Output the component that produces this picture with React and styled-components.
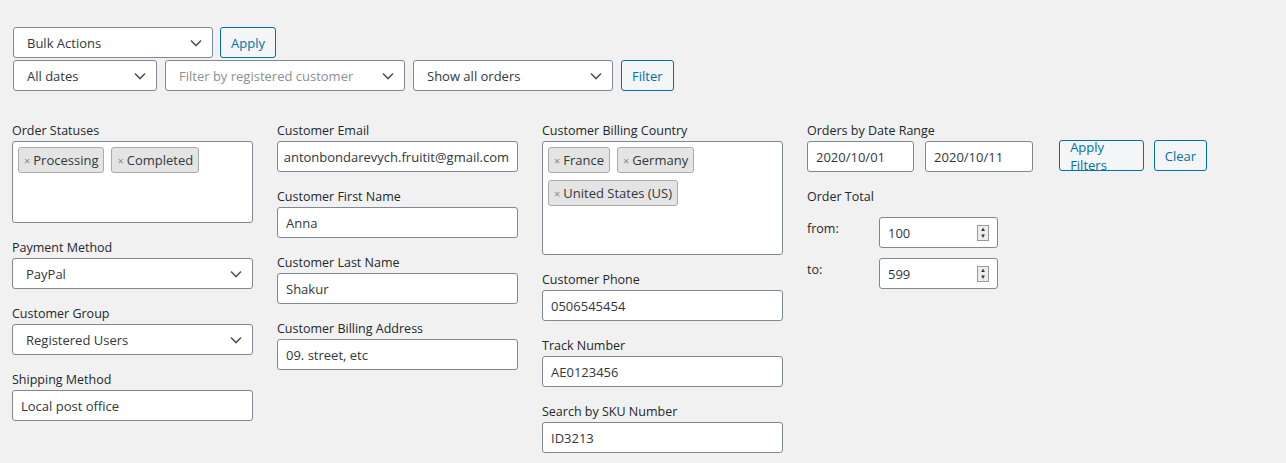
import React from "react";
import styled, { createGlobalStyle } from "styled-components";

const Global = createGlobalStyle`
  body { margin: 0; background: #f1f1f1; font-family: "Open Sans", "Noto Sans", sans-serif; font-size: 13px; color: #23282d; }
  * { box-sizing: border-box; }
`;
const Page = styled.div`padding: 27px 12px 0 12px; width: 1286px; height: 463px;`;
const Bar = styled.div`display: flex; gap: ${p => p.$gap || 7}px; margin-bottom: 2px; align-items: center;`;
const SelectBox = styled.div`
  width: ${p => p.$w}px; height: 31px; background: #fff; border: 1px solid #7e8993; border-radius: 3px;
  display: flex; align-items: center; justify-content: space-between; padding: 0 10px 0 13px;
  color: ${p => p.$ph ? "#8c8f94" : "#32373c"}; font-size: 13px; margin-left: ${p => p.$ml || 0}px;
`;
const Btn = styled.div`
  height: ${p => p.$h || 31}px; padding: 0 10px; border: 1px solid #0071a1; border-radius: 3px; color: #0071a1;
  background: #f3f5f6; display: flex; align-items: center; font-size: 13px;
`;
const Grid = styled.div`display: grid; grid-template-columns: 265px 265px 265px 400px; margin-top: 31px;`;
const Col = styled.div`display: flex; flex-direction: column; gap: 16px;`;
const Field = styled.div`display: flex; flex-direction: column;`;
const Label = styled.div`height: 18px; line-height: 18px; font-size: 12.5px; margin-bottom: 1px;`;
const Input = styled.div`
  width: ${p => p.$w || 241}px; height: ${p => p.$h || 31}px; background: #fff; border: 1px solid #7e8993; border-radius: 3px;
  padding: 0 8px; display: flex; align-items: center; color: #32373c; font-size: 13px; overflow: hidden; white-space: nowrap;
`;
const Multi = styled.div`
  width: ${p => p.$w}px; height: ${p => p.$h}px; background: #fff; border: 1px solid #7e8993; border-radius: 3px;
  padding: 5px 5px; display: flex; flex-wrap: wrap; align-content: flex-start; gap: 7px;
`;
const Tag = styled.div`
  height: 26px; padding: 0 5px; background: #e4e4e4; border: 1px solid #aaa; border-radius: 3px;
  display: flex; align-items: center; gap: 3px; color: #32373c; font-size: 13px;
  span { color: #888; font-size: 11px; }
`;
const Row = styled.div`display: flex; align-items: center; gap: ${p => p.$gap || 10}px;`;
const SmallLabel = styled.div`width: 62px; font-size: 12.5px; margin-top: -8px;`;
const Spin = styled.div`
  width: 12px; height: 16px; border: 1px solid #999; background: #eee; display: flex; flex-direction: column;
  align-items: center; justify-content: center; font-size: 6px; line-height: 7px; color: #333; margin-left: auto;
`;

const Chev = () => (
  <svg width="12" height="8" viewBox="0 0 12 8"><path d="M1 1.5 6 6.5 11 1.5" fill="none" stroke="#50575e" strokeWidth="1.6" /></svg>
);
const Sel = ({ w, children, ph, ml }) => <SelectBox $w={w} $ph={ph} $ml={ml}>{children}<Chev /></SelectBox>;
const F = ({ label, children }) => <Field><Label>{label}</Label>{children}</Field>;

export default function App() {
  return (
    <Page>
      <Global />
      <Bar><Sel w={200} ml={1}>Bulk Actions</Sel><Btn>Apply</Btn></Bar>
      <Bar $gap={8}>
        <Sel w={144} ml={1}>All dates</Sel>
        <Sel w={240} ph>Filter by registered customer</Sel>
        <Sel w={200}>Show all orders</Sel>
        <Btn>Filter</Btn>
      </Bar>
      <Grid>
        <Col>
          <F label="Order Statuses">
            <Multi $w={241} $h={82}><Tag><span>×</span>Processing</Tag><Tag><span>×</span>Completed</Tag></Multi>
          </F>
          <F label="Payment Method"><Sel w={241} ml={0}>PayPal</Sel></F>
          <F label="Customer Group"><Sel w={241}>Registered Users</Sel></F>
          <F label="Shipping Method"><Input>Local post office</Input></F>
        </Col>
        <Col>
          <F label="Customer Email"><Input style={{ justifyContent: "flex-end" }}>antonbondarevych.fruitit@gmail.com</Input></F>
          <F label="Customer First Name"><Input>Anna</Input></F>
          <F label="Customer Last Name"><Input>Shakur</Input></F>
          <F label="Customer Billing Address"><Input>09. street, etc</Input></F>
        </Col>
        <Col>
          <F label="Customer Billing Country">
            <Multi $w={241} $h={114}>
              <Tag><span>×</span>France</Tag><Tag><span>×</span>Germany</Tag><Tag><span>×</span>United States (US)</Tag>
            </Multi>
          </F>
          <F label="Customer Phone"><Input>0506545454</Input></F>
          <F label="Track Number"><Input>AE0123456</Input></F>
          <F label="Search by SKU Number"><Input>ID3213</Input></F>
        </Col>
        <Col>
          <F label="Orders by Date Range">
            <Row $gap={11}>
              <Input $w={114}>2020/10/01</Input>
              <Input $w={115}>2020/10/11</Input>
              <Row $gap={10} style={{ marginLeft: 15, marginTop: -2 }}>
                <Btn>Apply Filters</Btn><Btn>Clear</Btn>
              </Row>
            </Row>
          </F>
          <Col style={{ gap: 10 }}>
            <Label>Order Total</Label>
            <Row $gap={0}><SmallLabel>from:</SmallLabel><Input $w={119}>100<Spin><div>▲</div><div>▼</div></Spin></Input></Row>
            <Row $gap={0}><SmallLabel>to:</SmallLabel><Input $w={119}>599<Spin><div>▲</div><div>▼</div></Spin></Input></Row>
          </Col>
        </Col>
      </Grid>
    </Page>
  );
}
